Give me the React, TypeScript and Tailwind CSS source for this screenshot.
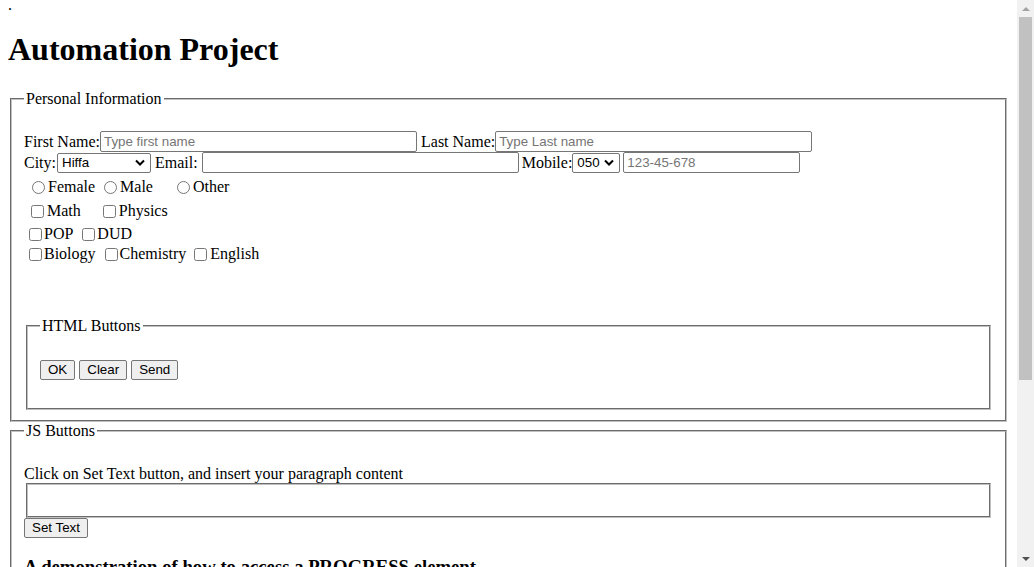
import React from 'react';

const sans = "font-['Liberation_Sans',Arial,sans-serif] text-[13.33px]";

function Chevron() {
  return (
    <svg width="10" height="7" viewBox="0 0 10 7" className="shrink-0">
      <path d="M1 1.5 L5 5.5 L9 1.5" fill="none" stroke="#000" strokeWidth="2" />
    </svg>
  );
}

function Select({ value, width }: { value: string; width: string }) {
  return (
    <div
      className={`flex h-[20px] ${width} items-center justify-between rounded-[2px] border border-[#767676] bg-white pl-[4px] pr-[5px] ${sans}`}
    >
      <span>{value}</span>
      <Chevron />
    </div>
  );
}

function TextInput({ width, placeholder }: { width: string; placeholder?: string }) {
  return (
    <input
      type="text"
      placeholder={placeholder}
      className={`h-[21px] ${width} rounded-[2px] border border-[#767676] bg-white pl-[3px] placeholder:text-[#757575] ${sans}`}
    />
  );
}

function Btn({ label }: { label: string }) {
  return (
    <button className={`h-[20px] rounded-[2px] border border-[#767676] bg-[#efefef] px-[7px] leading-none ${sans}`}>
      {label}
    </button>
  );
}

function Radio({ ml, label, tm }: { ml: string; label: string; tm: string }) {
  return (
    <>
      <input type="radio" name="gender" className={`m-0 h-[13px] w-[13px] ${ml}`} />
      <span className={tm}>{label}</span>
    </>
  );
}

function Check({ ml, label, tm }: { ml: string; label: string; tm: string }) {
  return (
    <>
      <input type="checkbox" className={`m-0 h-[13px] w-[13px] ${ml}`} />
      <span className={tm}>{label}</span>
    </>
  );
}

const groove = 'border-2 [border-style:groove] border-[#c0c0c0]';

export default function App() {
  return (
    <div className="flex h-[567px] w-[1034px] overflow-hidden bg-white font-['Liberation_Serif','Times_New_Roman',serif] text-[16px] leading-[normal] text-black">
      <div className="flex-1 overflow-hidden px-[8px] pt-[5px]">
        <div className="h-[5px] leading-[0px]">.</div>
        <h1 className="mt-[21.44px] mb-[21.44px] text-[32px] font-bold">Automation Project</h1>

        {/* Personal info */}
        <fieldset className={`mx-[2px] ${groove} px-[12px] pt-[5.6px] pb-[10px]`}>
          <legend className="px-[2px]">Personal Information</legend>

          <div className="mt-[18px] flex h-[21px] items-center whitespace-nowrap">
            <span>First Name:</span>
            <TextInput width="w-[317px]" placeholder="Type first name" />
            <span className="ml-[4px]">Last Name:</span>
            <TextInput width="w-[317px]" placeholder="Type Last name" />
          </div>

          <div className="flex h-[21px] items-center whitespace-nowrap">
            <span>City:</span>
            <div className="ml-[1px]">
              <Select value="Hiffa" width="w-[94px]" />
            </div>
            <span className="ml-[4px]">Email:</span>
            <div className="ml-[4px]">
              <TextInput width="w-[317px]" />
            </div>
            <span className="ml-[3px]">Mobile:</span>
            <Select value="050" width="w-[48px]" />
            <div className="ml-[3px]">
              <TextInput width="w-[177px]" placeholder="123-45-678" />
            </div>
          </div>

          <div className="mt-[4px] flex h-[20px] items-center whitespace-nowrap">
            <Radio ml="ml-[8px]" tm="ml-[3px]" label="Female" />
            <Radio ml="ml-[9px]" tm="ml-[3px]" label="Male" />
            <Radio ml="ml-[24px]" tm="ml-[3px]" label="Other" />
          </div>

          <div className="mt-[4px] flex h-[20px] items-center whitespace-nowrap">
            <Check ml="ml-[7px]" tm="ml-[3px]" label="Math" />
            <Check ml="ml-[22px]" tm="ml-[3px]" label="Physics" />
          </div>

          <div className="mt-[3px] flex h-[20px] items-center whitespace-nowrap">
            <Check ml="ml-[5px]" tm="ml-[2px]" label="POP" />
            <Check ml="ml-[9px]" tm="ml-[2px]" label="DUD" />
          </div>

          <div className="flex h-[20px] items-center whitespace-nowrap">
            <Check ml="ml-[5px]" tm="ml-[2px]" label="Biology" />
            <Check ml="ml-[9px]" tm="ml-[2px]" label="Chemistry" />
            <Check ml="ml-[8px]" tm="ml-[3px]" label="English" />
          </div>

          <fieldset className={`mx-[2px] mt-[53px] ${groove} px-[12px] pt-[5.6px] pb-[28px]`}>
            <legend className="px-[2px]">HTML Buttons</legend>
            <div className="mt-[19px] flex gap-[4px]">
              <Btn label="OK" />
              <Btn label="Clear" />
              <Btn label="Send" />
            </div>
          </fieldset>
        </fieldset>

        {/* JS buttons */}
        <fieldset className={`mx-[2px] ${groove} px-[12px] pt-[5.6px] pb-[10px]`}>
          <legend className="px-[2px]">JS Buttons</legend>
          <p className="mt-[19px]">Click on Set Text button, and insert your paragraph content</p>
          <div className={`mx-[2px] h-[35px] ${groove}`} />
          <Btn label="Set Text" />
          <h3 className="mt-[18.72px] text-[18.72px] font-bold">
            A demonstration of how to access a PROGRESS element
          </h3>
          <div className="h-[60px]" />
        </fieldset>
      </div>

      {/* scrollbar */}
      <div className="flex w-[17px] shrink-0 flex-col bg-[#f1f1f1]">
        <div className="flex h-[17px] items-center justify-center">
          <svg width="8" height="4" viewBox="0 0 8 4">
            <path d="M0 4 L4 0 L8 4 Z" fill="#a3a3a3" />
          </svg>
        </div>
        <div className="mx-[2px] h-[363px] bg-[#c1c1c1]" />
        <div className="flex-1" />
        <div className="flex h-[17px] items-center justify-center">
          <svg width="8" height="4" viewBox="0 0 8 4">
            <path d="M0 0 L8 0 L4 4 Z" fill="#505050" />
          </svg>
        </div>
      </div>
    </div>
  );
}
